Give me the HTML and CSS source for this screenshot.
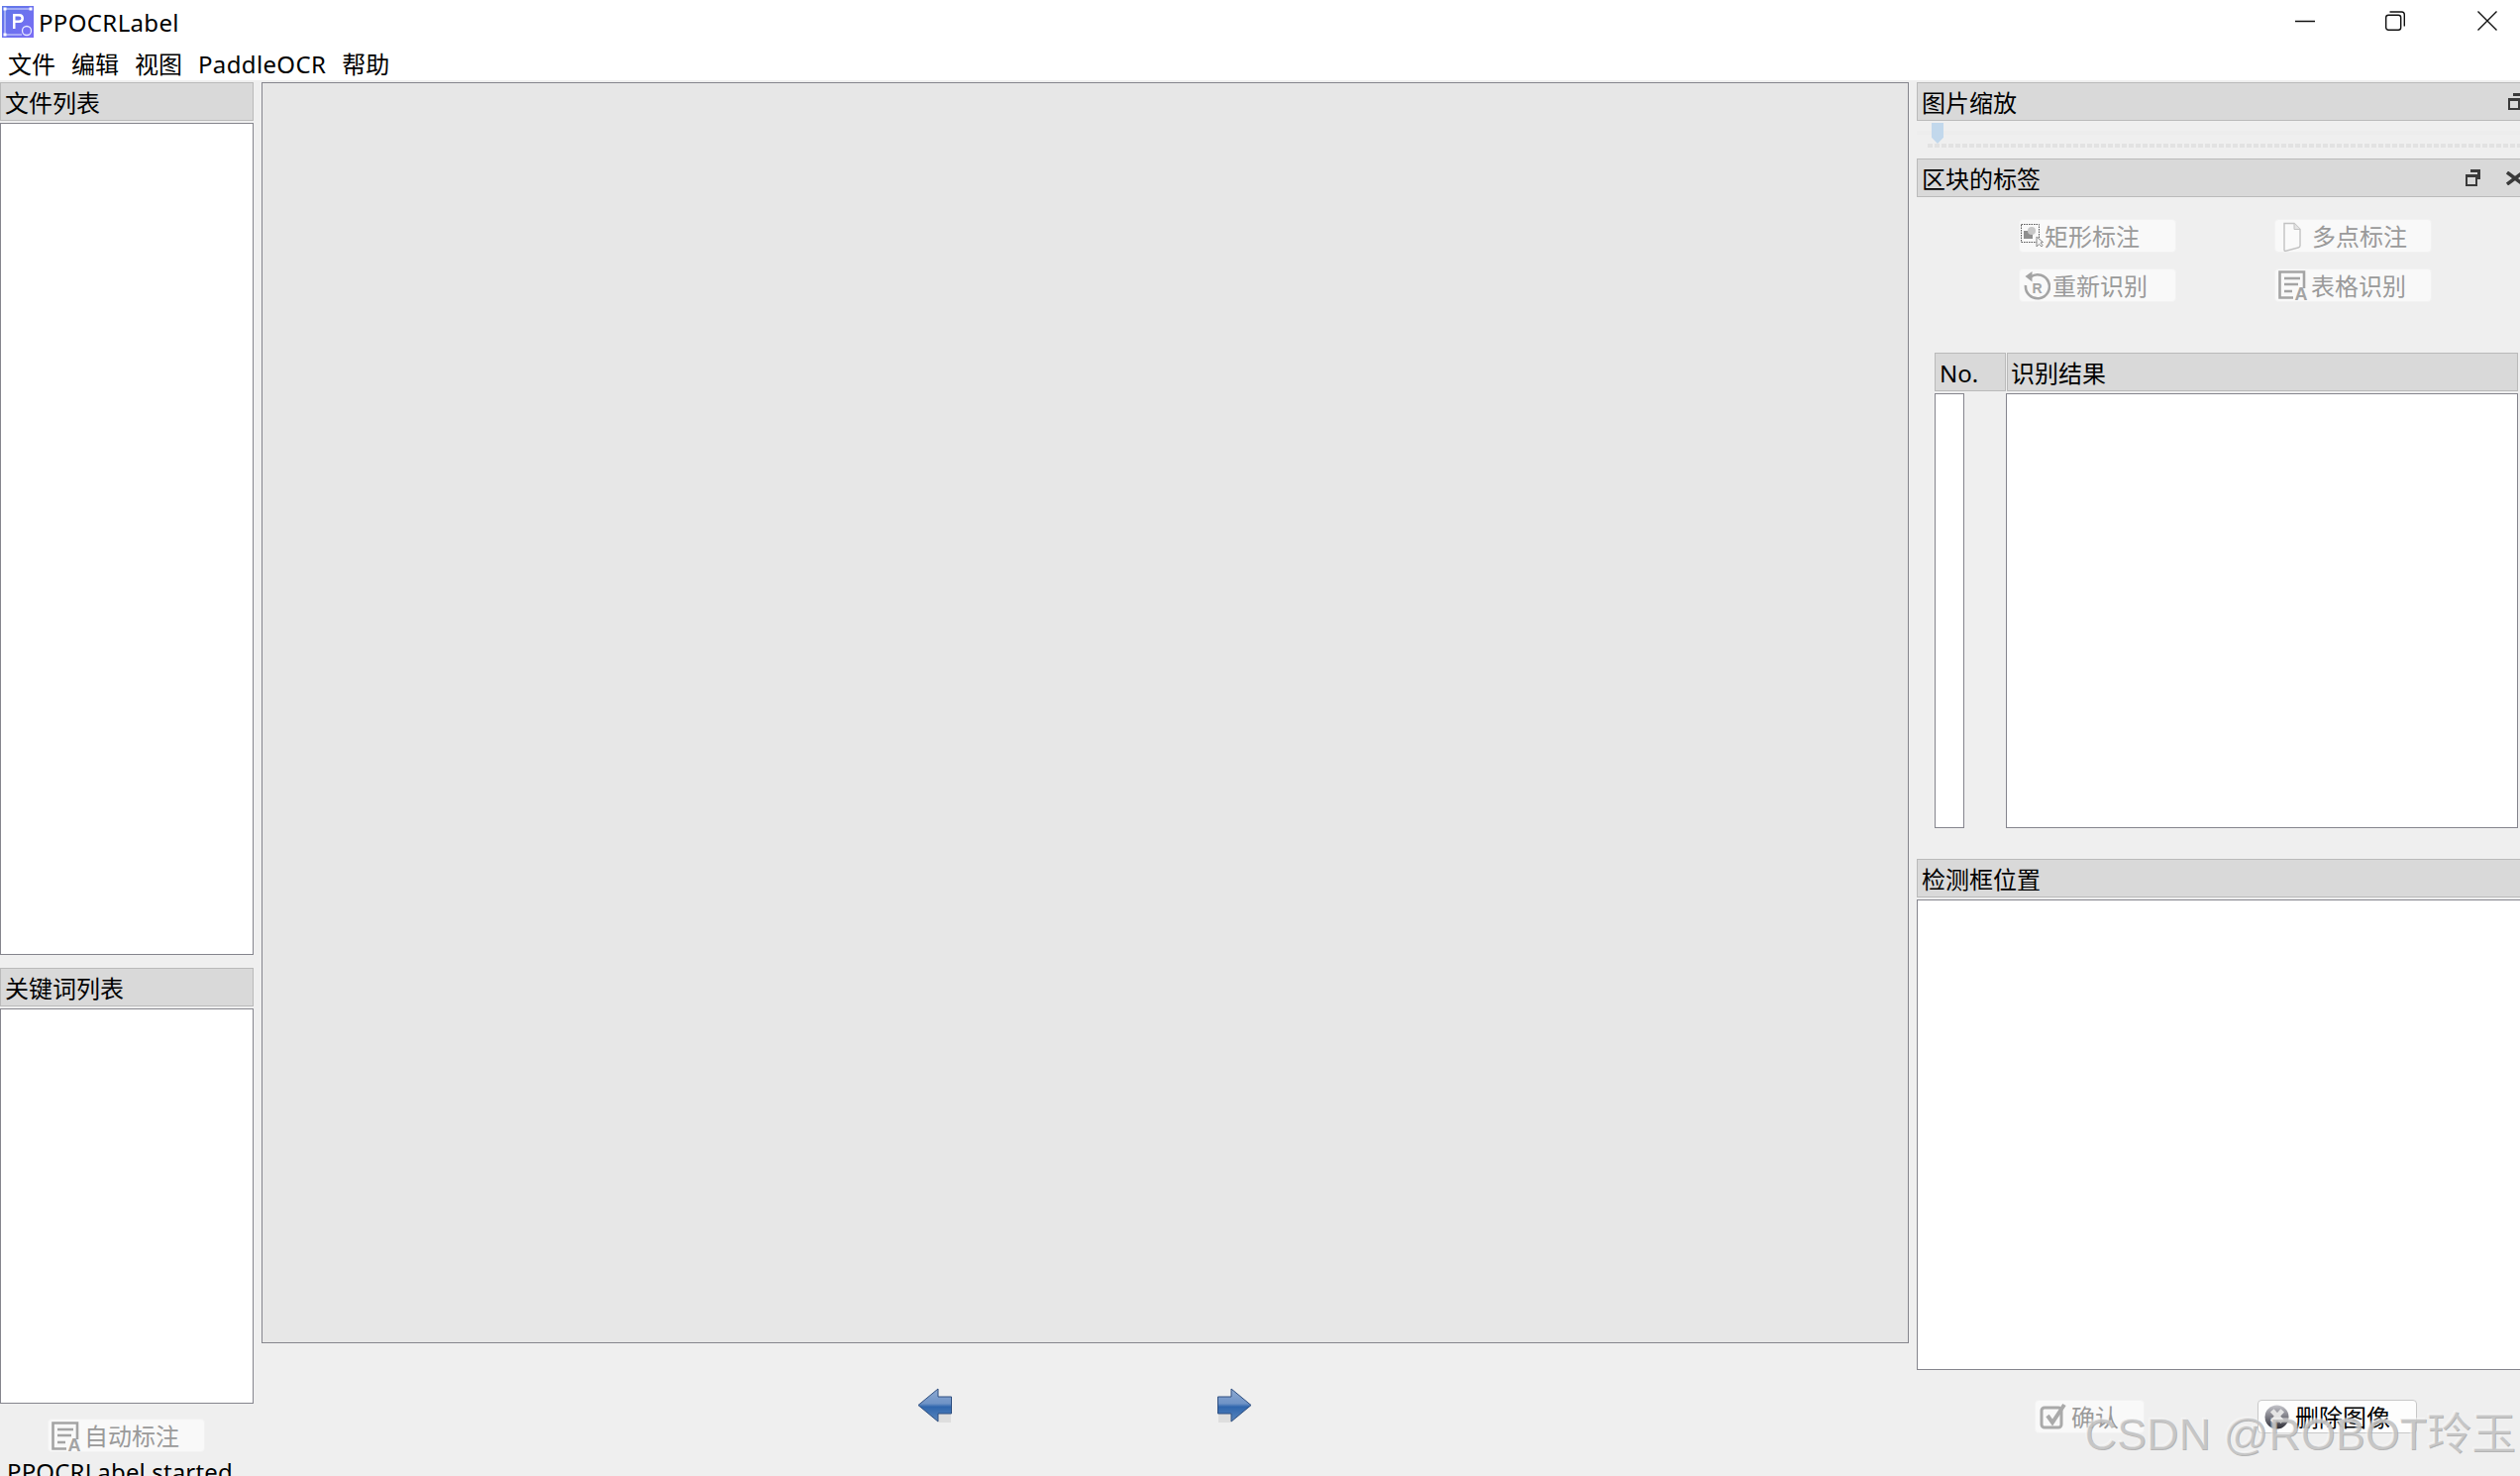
FILE: index.html
```html
<!DOCTYPE html>
<html>
<head>
  <meta charset="utf-8">
  <title>PPOCRLabel</title>
  <link rel="stylesheet" href="styles.css">
</head>
<body>
<div class="window">

  <div class="titlebar">
    <svg class="app-icon" viewBox="0 0 32 32">
      <defs>
        <linearGradient id="appBg" x1="0" y1="0" x2="1" y2="1">
          <stop offset="0" stop-color="#5f78e8"/>
          <stop offset="1" stop-color="#7a6cf5"/>
        </linearGradient>
      </defs>
      <rect width="32" height="32" fill="url(#appBg)"/>
      <path d="M3 3H29M3 3V29M3 29H20" stroke="#dfe4ff" stroke-width="1" fill="none"/>
      <rect x="1.500" y="1.500" width="3" height="3" fill="#fff"/>
      <rect x="27.500" y="1.500" width="3" height="3" fill="#fff"/>
      <rect x="1.500" y="27.500" width="3" height="3" fill="#fff"/>
      <path d="M11 23V8H17.500C20.500 8 22 10 22 12.500C22 15 20.500 17 17.500 17H13.500V23ZM13.500 10.500V14.500H17C18.500 14.500 19.400 13.800 19.400 12.500C19.400 11.200 18.500 10.500 17 10.500Z" fill="#fff"/>
      <circle cx="25" cy="25" r="4.500" fill="none" stroke="#e6e9ff" stroke-width="1.300"/>
    </svg>
    <span class="app-name">PPOCRLabel</span>
    <div class="win-controls">
      <svg class="win-btn" viewBox="0 0 20 20"><path d="M0 10.500H20" stroke="#111" stroke-width="1.500"/></svg>
      <svg class="win-btn" viewBox="0 0 20 20"><rect x="0.700" y="4.200" width="15" height="15" rx="2.500" fill="none" stroke="#111" stroke-width="1.400"/><path d="M4.500 1H16.500Q19.300 1 19.300 3.800V15.500" fill="none" stroke="#111" stroke-width="1.400"/></svg>
      <svg class="win-btn" viewBox="0 0 20 20"><path d="M0.500 0.500L19.500 19.500M19.500 0.500L0.500 19.500" stroke="#111" stroke-width="1.400"/></svg>
    </div>
  </div>

  <div class="menubar">
    <span class="menu-item">文件</span>
    <span class="menu-item">编辑</span>
    <span class="menu-item">视图</span>
    <span class="menu-item latin">PaddleOCR</span>
    <span class="menu-item">帮助</span>
  </div>

  <div class="main">

    <!-- dock izquierdo -->
    <div class="left-dock">
      <div class="dock-title">文件列表</div>
      <div class="list file-list"></div>
      <div class="dock-title keyword-title">关键词列表</div>
      <div class="list keyword-list"></div>
      <div class="auto-row">
        <button class="tool-btn auto-btn">
          <svg class="btn-icon" viewBox="0 0 30 30"><use href="#iconTable"/></svg>
          <span class="btn-label">自动标注</span>
        </button>
      </div>
      <div class="status">PPOCRLabel started</div>
    </div>

    <!-- centro -->
    <div class="center">
      <div class="canvas"></div>
      <div class="nav-row">
        <svg class="arrow" viewBox="0 0 36 36">
          <defs>
            <linearGradient id="arrowFill" x1="0" y1="0" x2="0" y2="1">
              <stop offset="0" stop-color="#8eaad2"/>
              <stop offset="0.45" stop-color="#6f93c6"/>
              <stop offset="0.55" stop-color="#2f66ad"/>
              <stop offset="1" stop-color="#5a86bd"/>
            </linearGradient>
          </defs>
          <path d="M2 19L21 35H34V25L21 24Z" fill="#000" opacity="0.07"/>
          <path d="M1 17.500L21 1V9H34.500V26H21V34Z" fill="url(#arrowFill)" stroke="#2f4f80" stroke-width="1"/>
        </svg>
        <svg class="arrow" viewBox="0 0 36 36">
          <path d="M34 19L15 35H2V25L15 24Z" fill="#000" opacity="0.07"/>
          <path d="M35 17.500L15 1V9H1.500V26H15V34Z" fill="url(#arrowFill)" stroke="#2f4f80" stroke-width="1"/>
        </svg>
      </div>
    </div>

    <!-- dock derecho -->
    <div class="right-dock">
      <div class="dock-title">
        图片缩放
        <svg class="float-icon clipped" viewBox="0 0 16 18"><use href="#iconFloat"/></svg>
      </div>
      <div class="zoom-slider">
        <div class="slider-groove"></div>
        <div class="slider-handle"></div>
        <div class="slider-ticks"></div>
      </div>
      <div class="dock-title">
        区块的标签
        <svg class="float-icon" viewBox="0 0 16 18"><use href="#iconFloat"/></svg>
        <svg class="close-icon" viewBox="0 0 18 14"><path d="M1 1L17 13M17 1L1 13" stroke="#3a3a3a" stroke-width="3.500"/></svg>
      </div>

      <div class="tool-grid">
        <button class="tool-btn">
          <svg class="btn-icon icon-rect" viewBox="0 0 24 24">
            <rect x="0.500" y="0.500" width="18" height="18" fill="none" stroke="#555" stroke-width="1" stroke-dasharray="1.500 1"/>
            <rect x="3" y="7" width="9" height="8" fill="#8f8f8f"/>
            <circle cx="11" cy="7" r="4" fill="#c8c8c8"/>
            <path d="M16 13L16 23L18.500 20.500L21 23L22 21.500L20 19L22.500 18.500Z" fill="#f4f4f4" stroke="#8a8a8a" stroke-width="1"/>
          </svg>
          <span class="btn-label">矩形标注</span>
        </button>
        <button class="tool-btn">
          <svg class="btn-icon icon-page" viewBox="0 0 20 32">
            <path d="M2 3.500H12L18 9.500V26Q18 27.500 16 28L3 31.500Q2 31.500 2 30Z" fill="#fafafa" stroke="#c2c2c2" stroke-width="1.400"/>
            <path d="M12 3.500V9.500H18" fill="#e4e4e4" stroke="#c2c2c2" stroke-width="1"/>
          </svg>
          <span class="btn-label">多点标注</span>
        </button>
        <button class="tool-btn">
          <svg class="btn-icon icon-redo" viewBox="0 0 28 30">
            <path d="M8 5.500A12 12 0 1 1 3 14" fill="none" stroke="#a4a4a4" stroke-width="2.600"/>
            <path d="M9.500 0L9.500 10.500L2.500 5Z" fill="#a4a4a4"/>
            <text class="icon-letter" x="14.500" y="22" text-anchor="middle" font-size="14">R</text>
          </svg>
          <span class="btn-label">重新识别</span>
        </button>
        <button class="tool-btn table-btn">
          <svg class="btn-icon" viewBox="0 0 30 30"><use href="#iconTable"/></svg>
          <span class="btn-label">表格识别</span>
        </button>
      </div>

      <div class="result-table">
        <div class="table-head">
          <div class="head-cell head-no">No.</div>
          <div class="head-cell head-text">识别结果</div>
        </div>
        <div class="table-body">
          <div class="list no-list"></div>
          <div class="list text-list"></div>
        </div>
      </div>

      <div class="dock-title box-title">检测框位置</div>
      <div class="list box-list"></div>

      <div class="bottom-row">
        <button class="tool-btn ok-btn">
          <svg class="btn-icon icon-check" viewBox="0 0 28 28">
            <rect x="2" y="5" width="20" height="20" rx="3" fill="none" stroke="#aaa" stroke-width="3"/>
            <path d="M8 13L13 20L25 2" fill="none" stroke="#aaa" stroke-width="4"/>
          </svg>
          <span class="btn-label">确认</span>
        </button>
        <button class="tool-btn del-btn">
          <svg class="btn-icon" viewBox="0 0 26 26">
            <defs>
              <linearGradient id="delBall" x1="0" y1="0" x2="0" y2="1">
                <stop offset="0" stop-color="#c4c4ca"/>
                <stop offset="0.5" stop-color="#7c7c84"/>
                <stop offset="1" stop-color="#2c2c34"/>
              </linearGradient>
            </defs>
            <circle cx="13" cy="13" r="12.500" fill="url(#delBall)"/>
            <path d="M8 6L19 18M19 6L8 18" stroke="#e4e4e4" stroke-width="5"/>
          </svg>
          <span class="btn-label">删除图像</span>
        </button>
      </div>
    </div>
  </div>

  <div class="watermark">CSDN @ROBOT玲玉</div>
</div>

<!-- iconos compartidos -->
<svg class="icon-defs" width="0" height="0">
  <symbol id="iconFloat" viewBox="0 0 16 18">
    <path d="M5 1H15V11H12V4H5Z" fill="#3a3a3a"/>
    <rect x="1" y="7" width="10" height="10" fill="none" stroke="#3a3a3a" stroke-width="2"/>
    <rect x="0" y="6" width="12" height="3" fill="#3a3a3a"/>
  </symbol>
  <symbol id="iconTable" viewBox="0 0 30 30">
    <path d="M26 18V1.500H1.500V27.500H15" fill="none" stroke="#a4a4a4" stroke-width="2.600"/>
    <path d="M6 8H22M6 14H20M6 21H14" stroke="#a4a4a4" stroke-width="2.400"/>
    <text class="icon-letter" x="23" y="30" text-anchor="middle" font-size="18">A</text>
  </symbol>
</svg>
</body>
</html>
```

FILE: styles.css
```css
* {
  box-sizing: border-box;
}

html, body {
  margin: 0;
  height: 100%;
  overflow: hidden;
}

body {
  background-color: #efefef;
  color: #000;
  font-family: "Noto Sans", "Noto Sans CJK SC", sans-serif;
  font-size: 24px;
}

.icon-defs {
  position: absolute;
}

.icon-letter {
  fill: #a4a4a4;
  font-family: "Liberation Sans", sans-serif;
  font-weight: bold;
}

.window {
  position: relative;
  width: 2544px;
  height: 1490px;
  overflow: hidden;
}

/* barra de titulo */
.titlebar {
  display: flex;
  align-items: center;
  height: 48px;
  padding-left: 2px;
  background-color: #fff;
}

.app-icon {
  width: 32px;
  height: 32px;
  margin-top: -4px;
}

.app-name {
  margin-left: 5px;
  margin-top: -2px;
  letter-spacing: 0.35px;
  line-height: 46px;
}

.win-controls {
  display: flex;
  gap: 71px;
  margin-left: auto;
  margin-right: 23px;
  margin-top: -6px;
}

.win-btn {
  width: 20px;
  height: 20px;
}

.win-btn:last-child {
  margin-left: 2px;
}

/* menu */
.menubar {
  display: flex;
  gap: 16px;
  height: 33px;
  padding-left: 8px;
  background-color: #fff;
  line-height: 33px;
}

.latin {
  letter-spacing: 0.35px;
}

/* layout principal */
.main {
  display: flex;
  height: 1409px;
  padding-top: 2px;
}

.dock-title {
  display: flex;
  flex: none;
  align-items: center;
  height: 39px;
  padding: 2px 0 0 4px;
  background-color: #d9d9d9;
  border: 1px solid #bababa;
  line-height: 35px;
  white-space: nowrap;
}

.list {
  flex: none;
  background-color: #fff;
  border: 1px solid #85858d;
}

.left-dock {
  display: flex;
  flex-direction: column;
  flex: none;
  width: 256px;
}

.file-list {
  height: 840px;
  margin-top: 2px;
}

.keyword-title {
  margin-top: 13px;
}

.keyword-list {
  height: 399px;
  margin-top: 2px;
}

.auto-row {
  display: flex;
  flex: none;
  padding: 15px 0 0 48px;
}

.status {
  flex: none;
  margin-top: 3px;
  padding-left: 7px;
  letter-spacing: 0.15px;
  line-height: 34px;
  white-space: nowrap;
}

/* botones */
.tool-btn {
  display: flex;
  align-items: center;
  width: 159px;
  height: 34px;
  padding: 0 0 0 3px;
  background-color: #f9f9f9;
  border: 1px solid #f2f2f2;
  border-radius: 4px;
  color: #9a9a9a;
  font-family: inherit;
  font-size: 24px;
  white-space: nowrap;
}

.btn-icon {
  flex: none;
  width: 30px;
  height: 30px;
}

.btn-label {
  margin-top: -2px;
}

.table-btn .btn-label {
  margin-left: 3px;
}

.auto-btn .btn-icon {
  margin-top: 2px;
  margin-right: 3px;
}

.icon-rect {
  width: 24px;
  height: 24px;
  margin-left: -2px;
}

.icon-page {
  width: 20px;
  height: 32px;
  margin-left: 4px;
  margin-right: 10px;
}

.icon-redo {
  width: 28px;
  height: 30px;
  margin-top: 2px;
  margin-right: 2px;
}

.icon-check {
  width: 28px;
  height: 28px;
  margin-left: 1px;
  margin-right: 4px;
}

/* centro */
.center {
  display: flex;
  flex-direction: column;
  flex: none;
  width: 1663px;
  margin-left: 8px;
}

.canvas {
  flex: none;
  height: 1273px;
  background-color: #e7e7e7;
  border: 1px solid #85858d;
}

.nav-row {
  display: flex;
  gap: 266px;
  padding: 45px 0 0 662px;
}

.arrow {
  width: 36px;
  height: 36px;
}

/* dock derecho */
.right-dock {
  display: flex;
  flex-direction: column;
  flex: none;
  width: 630px;
  margin-left: 8px;
  margin-right: -21px;
}

.right-dock .dock-title {
  position: relative;
}

.float-icon {
  position: absolute;
  top: 9px;
  right: 59px;
  width: 16px;
  height: 18px;
}

.float-icon.clipped {
  right: 16px;
}

.close-icon {
  position: absolute;
  top: 12px;
  right: 16px;
  width: 18px;
  height: 14px;
}

.zoom-slider {
  position: relative;
  flex: none;
  height: 38px;
}

.slider-groove {
  position: absolute;
  top: 10px;
  left: 0;
  right: 0;
  height: 4px;
  background-color: #ededed;
}

.slider-handle {
  position: absolute;
  top: 2px;
  left: 15px;
  width: 12px;
  height: 21px;
  background-color: #c2d8ec;
  clip-path: polygon(0 0, 100% 0, 100% 70%, 50% 100%, 0 70%);
}

.slider-ticks {
  position: absolute;
  top: 23px;
  left: 11px;
  right: 0;
  height: 4px;
  background-image: repeating-linear-gradient(90deg, #e2e2e2 0 5px, #efefef 5px 7px);
}

.tool-grid {
  display: grid;
  flex: none;
  grid-template-columns: 159px 159px;
  column-gap: 99px;
  row-gap: 16px;
  padding: 22px 0 0 103px;
}

.result-table {
  flex: none;
  width: 589px;
  margin: 51px 0 0 18px;
}

.table-head {
  display: flex;
  height: 39px;
}

.head-cell {
  height: 39px;
  padding: 2px 0 0 4px;
  background-color: #d9d9d9;
  border: 1px solid #bababa;
  line-height: 35px;
}

.head-no {
  width: 72px;
  margin-right: 1px;
}

.head-text {
  flex: 1;
  padding-left: 3px;
}

.table-body {
  display: flex;
  height: 439px;
  margin-top: 2px;
}

.no-list {
  width: 30px;
}

.text-list {
  flex: 1;
  margin-left: 42px;
}

.box-title {
  margin-top: 31px;
}

.box-list {
  height: 475px;
  margin-top: 2px;
}

.bottom-row {
  display: flex;
  flex: none;
  padding: 30px 0 0 119px;
}

.ok-btn {
  width: 111px;
}

.del-btn {
  width: 161px;
  margin-left: 114px;
  background-color: #fdfdfd;
  border-color: #c8c8c8;
  color: #000;
}

.del-btn .btn-icon {
  width: 25px;
  height: 25px;
  margin-left: 3px;
  margin-right: 6px;
}

/* marca de agua */
.watermark {
  position: absolute;
  left: 2104px;
  top: 1421px;
  color: rgba(222, 222, 222, 0.45);
  font-family: "Liberation Sans", "Noto Sans CJK SC", sans-serif;
  font-size: 45px;
  line-height: 54px;
  white-space: nowrap;
  text-shadow: 1px 1px 0 rgba(170, 170, 170, 0.85), -1px -1px 0 rgba(255, 255, 255, 0.4);
}
```
